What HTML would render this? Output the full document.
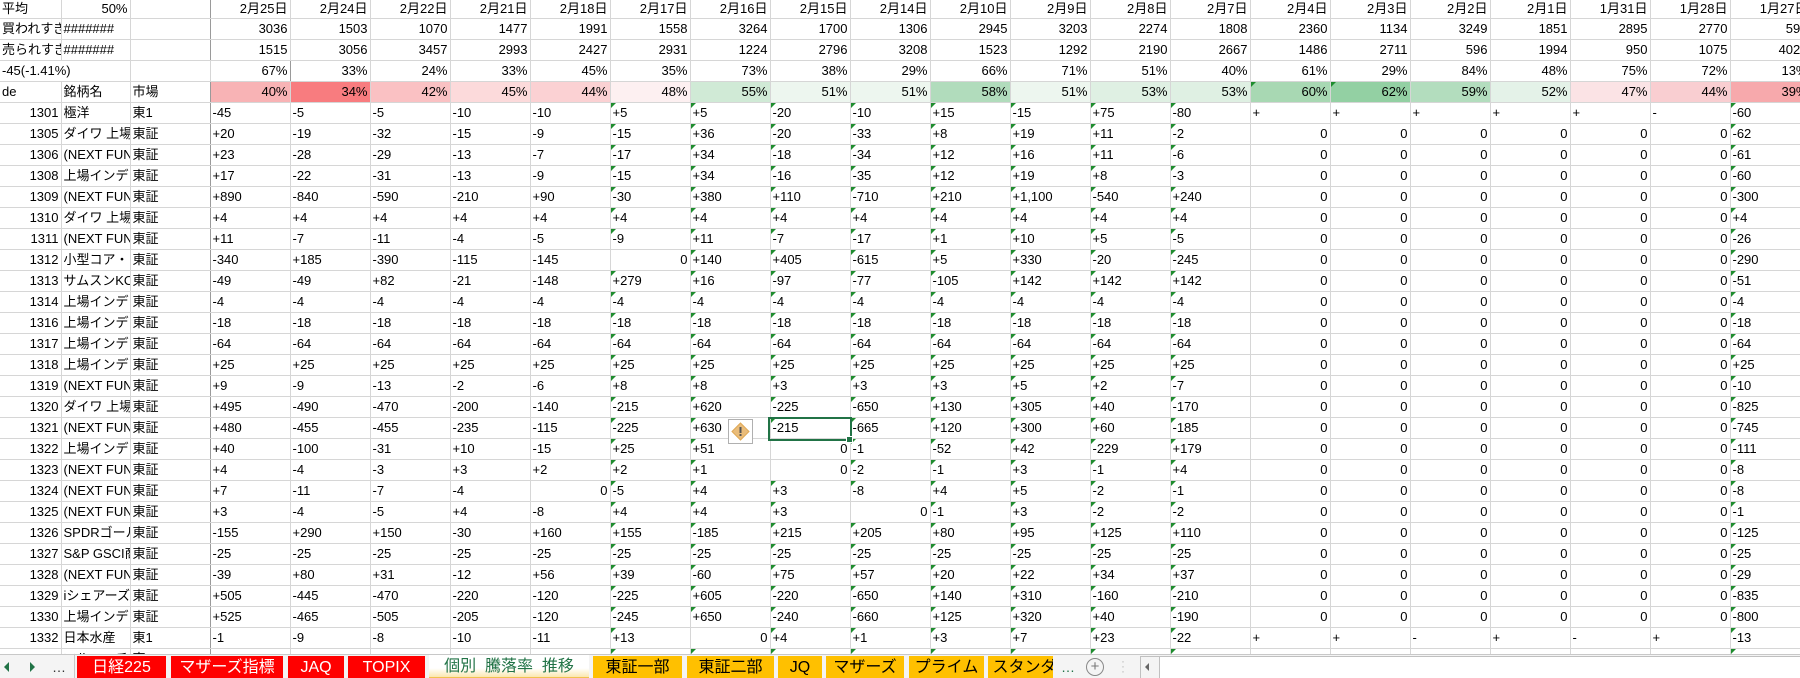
<!DOCTYPE html>
<html><head><meta charset="utf-8">
<style>
html,body{margin:0;padding:0;width:1800px;height:678px;overflow:hidden;background:#fff;}
body{font-family:"Liberation Sans","Noto Sans CJK JP",sans-serif;font-size:13px;color:#000;position:relative;}
table{border-collapse:collapse;table-layout:fixed;position:absolute;left:0;top:0;width:1810px;}
td{height:20px;padding:0 2px;white-space:nowrap;overflow:hidden;border-right:1px solid #d6d6d6;border-bottom:1px solid #d6d6d6;line-height:20px;position:relative;text-align:left;}
tr.h0 td{height:18px;line-height:18px;}
td.r{text-align:right;}
td:nth-child(3){border-right:1px solid #9a9a9a;}
tr.hd td:nth-child(n+2){text-align:right;}
tr.hd td.l{text-align:left;}
tr.d td:nth-child(n+17):nth-child(-n+22){text-align:right;}
tr.d td.l{text-align:left !important;}
tr.d td:nth-child(1){text-align:right;}
tr.d td:nth-child(n+9):nth-child(-n+16):not(.r)::before,
tr.d td:nth-child(23)::before,td.t::before{content:"";position:absolute;left:0;top:0;border-top:5px solid #1e8c2e;border-right:5px solid transparent;}
.tabbar{position:absolute;left:0;top:654px;width:1800px;height:24px;background:#f4f4f4;border-top:1px solid #c8c8c8;}
.tab{position:absolute;top:1px;height:23px;line-height:23px;text-align:center;font-size:16px;}
.red{background:#ff0000;color:#fff;}
.yel{background:#ffc000;color:#000;}
</style></head><body>
<table>
<colgroup><col style="width:61px"><col style="width:69px"><col style="width:80px">
<col span="20" style="width:80px"></colgroup>
<tr class="hd h0"><td class="l">平均</td><td>50%</td><td></td><td>2月25日</td><td>2月24日</td><td>2月22日</td><td>2月21日</td><td>2月18日</td><td>2月17日</td><td>2月16日</td><td>2月15日</td><td>2月14日</td><td>2月10日</td><td>2月9日</td><td>2月8日</td><td>2月7日</td><td>2月4日</td><td>2月3日</td><td>2月2日</td><td>2月1日</td><td>1月31日</td><td>1月28日</td><td>1月27日</td></tr>
<tr class="hd"><td class="l">買われすぎ</td><td class="l">#######</td><td></td><td>3036</td><td>1503</td><td>1070</td><td>1477</td><td>1991</td><td>1558</td><td>3264</td><td>1700</td><td>1306</td><td>2945</td><td>3203</td><td>2274</td><td>1808</td><td>2360</td><td>1134</td><td>3249</td><td>1851</td><td>2895</td><td>2770</td><td>596</td></tr>
<tr class="hd"><td class="l">売られすぎ</td><td class="l">#######</td><td></td><td>1515</td><td>3056</td><td>3457</td><td>2993</td><td>2427</td><td>2931</td><td>1224</td><td>2796</td><td>3208</td><td>1523</td><td>1292</td><td>2190</td><td>2667</td><td>1486</td><td>2711</td><td>596</td><td>1994</td><td>950</td><td>1075</td><td>4023</td></tr>
<tr class="hd"><td class="l" colspan="2">-45(-1.41%)</td><td></td><td>67%</td><td>33%</td><td>24%</td><td>33%</td><td>45%</td><td>35%</td><td>73%</td><td>38%</td><td>29%</td><td>66%</td><td>71%</td><td>51%</td><td>40%</td><td>61%</td><td>29%</td><td>84%</td><td>48%</td><td>75%</td><td>72%</td><td>13%</td></tr>
<tr class="hd"><td class="l">de</td><td class="l">銘柄名</td><td class="l">市場</td><td style="background:#f8b3b5">40%</td><td style="background:#f87c7f">34%</td><td style="background:#fac1c3">42%</td><td style="background:#fcdadb">45%</td><td style="background:#fbd1d3">44%</td><td style="background:#fdf0f1">48%</td><td style="background:#d0ead6">55%</td><td style="background:#edf6ef">51%</td><td style="background:#edf6ef">51%</td><td style="background:#b1dcbc">58%</td><td style="background:#edf6ef">51%</td><td style="background:#dff0e3">53%</td><td style="background:#dff0e3">53%</td><td class="t" style="background:#a8d8b3">60%</td><td class="t" style="background:#93d0a3">62%</td><td style="background:#b3ddbe">59%</td><td style="background:#e4f2e8">52%</td><td style="background:#fbe3e5">47%</td><td style="background:#f9ced1">44%</td><td style="background:#f7a9ac">39%</td></tr>
<tr class="d"><td>1301</td><td>極洋</td><td>東1</td><td>-45</td><td>-5</td><td>-5</td><td>-10</td><td>-10</td><td>+5</td><td>+5</td><td>-20</td><td>-10</td><td>+15</td><td>-15</td><td>+75</td><td>-80</td><td class="l">+</td><td class="l">+</td><td class="l">+</td><td class="l">+</td><td class="l">+</td><td class="l">-</td><td>-60</td></tr>
<tr class="d"><td>1305</td><td>ダイワ 上場</td><td>東証</td><td>+20</td><td>-19</td><td>-32</td><td>-15</td><td>-9</td><td>-15</td><td>+36</td><td>-20</td><td>-33</td><td>+8</td><td>+19</td><td>+11</td><td>-2</td><td>0</td><td>0</td><td>0</td><td>0</td><td>0</td><td>0</td><td>-62</td></tr>
<tr class="d"><td>1306</td><td>(NEXT FUN</td><td>東証</td><td>+23</td><td>-28</td><td>-29</td><td>-13</td><td>-7</td><td>-17</td><td>+34</td><td>-18</td><td>-34</td><td>+12</td><td>+16</td><td>+11</td><td>-6</td><td>0</td><td>0</td><td>0</td><td>0</td><td>0</td><td>0</td><td>-61</td></tr>
<tr class="d"><td>1308</td><td>上場インデ</td><td>東証</td><td>+17</td><td>-22</td><td>-31</td><td>-13</td><td>-9</td><td>-15</td><td>+34</td><td>-16</td><td>-35</td><td>+12</td><td>+19</td><td>+8</td><td>-3</td><td>0</td><td>0</td><td>0</td><td>0</td><td>0</td><td>0</td><td>-60</td></tr>
<tr class="d"><td>1309</td><td>(NEXT FUN</td><td>東証</td><td>+890</td><td>-840</td><td>-590</td><td>-210</td><td>+90</td><td>-30</td><td>+380</td><td>+110</td><td>-710</td><td>+210</td><td>+1,100</td><td>-540</td><td>+240</td><td>0</td><td>0</td><td>0</td><td>0</td><td>0</td><td>0</td><td>-300</td></tr>
<tr class="d"><td>1310</td><td>ダイワ 上場</td><td>東証</td><td>+4</td><td>+4</td><td>+4</td><td>+4</td><td>+4</td><td>+4</td><td>+4</td><td>+4</td><td>+4</td><td>+4</td><td>+4</td><td>+4</td><td>+4</td><td>0</td><td>0</td><td>0</td><td>0</td><td>0</td><td>0</td><td>+4</td></tr>
<tr class="d"><td>1311</td><td>(NEXT FUN</td><td>東証</td><td>+11</td><td>-7</td><td>-11</td><td>-4</td><td>-5</td><td>-9</td><td>+11</td><td>-7</td><td>-17</td><td>+1</td><td>+10</td><td>+5</td><td>-5</td><td>0</td><td>0</td><td>0</td><td>0</td><td>0</td><td>0</td><td>-26</td></tr>
<tr class="d"><td>1312</td><td>小型コア・</td><td>東証</td><td>-340</td><td>+185</td><td>-390</td><td>-115</td><td>-145</td><td class="r">0</td><td>+140</td><td>+405</td><td>-615</td><td>+5</td><td>+330</td><td>-20</td><td>-245</td><td>0</td><td>0</td><td>0</td><td>0</td><td>0</td><td>0</td><td>-290</td></tr>
<tr class="d"><td>1313</td><td>サムスンKO</td><td>東証</td><td>-49</td><td>-49</td><td>+82</td><td>-21</td><td>-148</td><td>+279</td><td>+16</td><td>-97</td><td>-77</td><td>-105</td><td>+142</td><td>+142</td><td>+142</td><td>0</td><td>0</td><td>0</td><td>0</td><td>0</td><td>0</td><td>-51</td></tr>
<tr class="d"><td>1314</td><td>上場インデ</td><td>東証</td><td>-4</td><td>-4</td><td>-4</td><td>-4</td><td>-4</td><td>-4</td><td>-4</td><td>-4</td><td>-4</td><td>-4</td><td>-4</td><td>-4</td><td>-4</td><td>0</td><td>0</td><td>0</td><td>0</td><td>0</td><td>0</td><td>-4</td></tr>
<tr class="d"><td>1316</td><td>上場インデ</td><td>東証</td><td>-18</td><td>-18</td><td>-18</td><td>-18</td><td>-18</td><td>-18</td><td>-18</td><td>-18</td><td>-18</td><td>-18</td><td>-18</td><td>-18</td><td>-18</td><td>0</td><td>0</td><td>0</td><td>0</td><td>0</td><td>0</td><td>-18</td></tr>
<tr class="d"><td>1317</td><td>上場インデ</td><td>東証</td><td>-64</td><td>-64</td><td>-64</td><td>-64</td><td>-64</td><td>-64</td><td>-64</td><td>-64</td><td>-64</td><td>-64</td><td>-64</td><td>-64</td><td>-64</td><td>0</td><td>0</td><td>0</td><td>0</td><td>0</td><td>0</td><td>-64</td></tr>
<tr class="d"><td>1318</td><td>上場インデ</td><td>東証</td><td>+25</td><td>+25</td><td>+25</td><td>+25</td><td>+25</td><td>+25</td><td>+25</td><td>+25</td><td>+25</td><td>+25</td><td>+25</td><td>+25</td><td>+25</td><td>0</td><td>0</td><td>0</td><td>0</td><td>0</td><td>0</td><td>+25</td></tr>
<tr class="d"><td>1319</td><td>(NEXT FUN</td><td>東証</td><td>+9</td><td>-9</td><td>-13</td><td>-2</td><td>-6</td><td>+8</td><td>+8</td><td>+3</td><td>+3</td><td>+3</td><td>+5</td><td>+2</td><td>-7</td><td>0</td><td>0</td><td>0</td><td>0</td><td>0</td><td>0</td><td>-10</td></tr>
<tr class="d"><td>1320</td><td>ダイワ 上場</td><td>東証</td><td>+495</td><td>-490</td><td>-470</td><td>-200</td><td>-140</td><td>-215</td><td>+620</td><td>-225</td><td>-650</td><td>+130</td><td>+305</td><td>+40</td><td>-170</td><td>0</td><td>0</td><td>0</td><td>0</td><td>0</td><td>0</td><td>-825</td></tr>
<tr class="d"><td>1321</td><td>(NEXT FUN</td><td>東証</td><td>+480</td><td>-455</td><td>-455</td><td>-235</td><td>-115</td><td>-225</td><td>+630</td><td>-215</td><td>-665</td><td>+120</td><td>+300</td><td>+60</td><td>-185</td><td>0</td><td>0</td><td>0</td><td>0</td><td>0</td><td>0</td><td>-745</td></tr>
<tr class="d"><td>1322</td><td>上場インデ</td><td>東証</td><td>+40</td><td>-100</td><td>-31</td><td>+10</td><td>-15</td><td>+25</td><td>+51</td><td class="r">0</td><td>-1</td><td>-52</td><td>+42</td><td>-229</td><td>+179</td><td>0</td><td>0</td><td>0</td><td>0</td><td>0</td><td>0</td><td>-111</td></tr>
<tr class="d"><td>1323</td><td>(NEXT FUN</td><td>東証</td><td>+4</td><td>-4</td><td>-3</td><td>+3</td><td>+2</td><td>+2</td><td>+1</td><td class="r">0</td><td>-2</td><td>-1</td><td>+3</td><td>-1</td><td>+4</td><td>0</td><td>0</td><td>0</td><td>0</td><td>0</td><td>0</td><td>-8</td></tr>
<tr class="d"><td>1324</td><td>(NEXT FUN</td><td>東証</td><td>+7</td><td>-11</td><td>-7</td><td>-4</td><td class="r">0</td><td>-5</td><td>+4</td><td>+3</td><td>-8</td><td>+4</td><td>+5</td><td>-2</td><td>-1</td><td>0</td><td>0</td><td>0</td><td>0</td><td>0</td><td>0</td><td>-8</td></tr>
<tr class="d"><td>1325</td><td>(NEXT FUN</td><td>東証</td><td>+3</td><td>-4</td><td>-5</td><td>+4</td><td>-8</td><td>+4</td><td>+4</td><td>+3</td><td class="r">0</td><td>-1</td><td>+3</td><td>-2</td><td>-2</td><td>0</td><td>0</td><td>0</td><td>0</td><td>0</td><td>0</td><td>-1</td></tr>
<tr class="d"><td>1326</td><td>SPDRゴール</td><td>東証</td><td>-155</td><td>+290</td><td>+150</td><td>-30</td><td>+160</td><td>+155</td><td>-185</td><td>+215</td><td>+205</td><td>+80</td><td>+95</td><td>+125</td><td>+110</td><td>0</td><td>0</td><td>0</td><td>0</td><td>0</td><td>0</td><td>-125</td></tr>
<tr class="d"><td>1327</td><td>S&amp;P GSCI商</td><td>東証</td><td>-25</td><td>-25</td><td>-25</td><td>-25</td><td>-25</td><td>-25</td><td>-25</td><td>-25</td><td>-25</td><td>-25</td><td>-25</td><td>-25</td><td>-25</td><td>0</td><td>0</td><td>0</td><td>0</td><td>0</td><td>0</td><td>-25</td></tr>
<tr class="d"><td>1328</td><td>(NEXT FUN</td><td>東証</td><td>-39</td><td>+80</td><td>+31</td><td>-12</td><td>+56</td><td>+39</td><td>-60</td><td>+75</td><td>+57</td><td>+20</td><td>+22</td><td>+34</td><td>+37</td><td>0</td><td>0</td><td>0</td><td>0</td><td>0</td><td>0</td><td>-29</td></tr>
<tr class="d"><td>1329</td><td>iシェアーズ</td><td>東証</td><td>+505</td><td>-445</td><td>-470</td><td>-220</td><td>-120</td><td>-225</td><td>+605</td><td>-220</td><td>-650</td><td>+140</td><td>+310</td><td>-160</td><td>-210</td><td>0</td><td>0</td><td>0</td><td>0</td><td>0</td><td>0</td><td>-835</td></tr>
<tr class="d"><td>1330</td><td>上場インデ</td><td>東証</td><td>+525</td><td>-465</td><td>-505</td><td>-205</td><td>-120</td><td>-245</td><td>+650</td><td>-240</td><td>-660</td><td>+125</td><td>+320</td><td>+40</td><td>-190</td><td>0</td><td>0</td><td>0</td><td>0</td><td>0</td><td>0</td><td>-800</td></tr>
<tr class="d"><td>1332</td><td>日本水産</td><td>東1</td><td>-1</td><td>-9</td><td>-8</td><td>-10</td><td>-11</td><td>+13</td><td class="r">0</td><td>+4</td><td>+1</td><td>+3</td><td>+7</td><td>+23</td><td>-22</td><td class="l">+</td><td class="l">+</td><td class="l">-</td><td class="l">+</td><td class="l">-</td><td class="l">+</td><td>-13</td></tr>
<tr class="d"><td>1333</td><td>マルハニチ</td><td>東1</td><td>-20</td><td>-30</td><td>-10</td><td>-20</td><td>-15</td><td>+5</td><td>-30</td><td>+10</td><td>+15</td><td>+20</td><td>+30</td><td>+155</td><td>-20</td><td class="l">+</td><td class="l">+</td><td class="l">+</td><td class="l">+</td><td class="l">+</td><td class="l">+</td><td>-60</td></tr>
</table>

<div style="position:absolute;left:768px;top:417px;width:80px;height:20px;border:2px solid #217346;"></div>
<div style="position:absolute;left:846px;top:436px;width:5px;height:5px;background:#217346;border:1px solid #fff;"></div>
<div style="position:absolute;left:728px;top:419px;width:23px;height:23px;background:#fff;border:1px solid #b0b0b0;">
 <svg width="23" height="23" viewBox="0 0 23 23"><path d="M11.5 3 L20 11.5 L11.5 20 L3 11.5 Z" fill="#e9bc7a" stroke="#e0a955" stroke-width="1"/><rect x="10.5" y="7" width="2" height="6" fill="#555"/><rect x="10.5" y="14" width="2" height="2" fill="#555"/></svg>
</div>

<div class="tabbar">
 <div style="position:absolute;left:4px;top:7px;width:0;height:0;border-top:5px solid transparent;border-bottom:5px solid transparent;border-right:5px solid #217346;"></div>
 <div style="position:absolute;left:30px;top:7px;width:0;height:0;border-top:5px solid transparent;border-bottom:5px solid transparent;border-left:5px solid #217346;"></div>
 <div style="position:absolute;left:52px;top:2px;font-size:14px;line-height:20px;color:#333;">…</div>
 <div style="position:absolute;left:74px;top:0;width:1px;height:24px;background:#c8c8c8;"></div>
 <div class="tab red" style="left:77px;width:89px;">日経225</div>
 <div class="tab red" style="left:171px;width:112px;">マザーズ指標</div>
 <div class="tab red" style="left:288px;width:56px;">JAQ</div>
 <div class="tab red" style="left:348px;width:77px;">TOPIX</div>
 <div class="tab" style="left:429px;width:160px;top:0;height:24px;background:linear-gradient(#fff 60%,#fbe7b0);color:#217346;border-bottom:2px solid #f2c14e;box-sizing:border-box;">個別&nbsp;&nbsp;騰落率&nbsp;&nbsp;推移</div>
 <div class="tab yel" style="left:593px;width:89px;">東証一部</div>
 <div class="tab yel" style="left:687px;width:87px;">東証二部</div>
 <div class="tab yel" style="left:778px;width:44px;">JQ</div>
 <div class="tab yel" style="left:826px;width:78px;">マザーズ</div>
 <div class="tab yel" style="left:909px;width:75px;">プライム</div>
 <div class="tab yel" style="left:988px;width:65px;text-align:left;overflow:hidden;white-space:nowrap;">&nbsp;スタンダード</div>
 <div style="position:absolute;left:1061px;top:2px;font-size:14px;line-height:20px;color:#217346;">…</div>
 <div style="position:absolute;left:1086px;top:3px;width:16px;height:16px;border:1px solid #888;border-radius:50%;text-align:center;line-height:16px;font-size:15px;color:#777;">+</div>
 <div style="position:absolute;left:1121px;top:4px;font-size:12px;line-height:5px;color:#bbb;">·<br>·<br>·</div>
 <div style="position:absolute;left:1140px;top:1px;width:660px;height:22px;background:#fff;border:1px solid #c0c0c0;"></div>
 <div style="position:absolute;left:1140px;top:1px;width:18px;height:22px;border:1px solid #c0c0c0;background:#f4f4f4;"></div>
 <div style="position:absolute;left:1145px;top:8px;width:0;height:0;border-top:4px solid transparent;border-bottom:4px solid transparent;border-right:4px solid #666;"></div>
</div>
</body></html>
